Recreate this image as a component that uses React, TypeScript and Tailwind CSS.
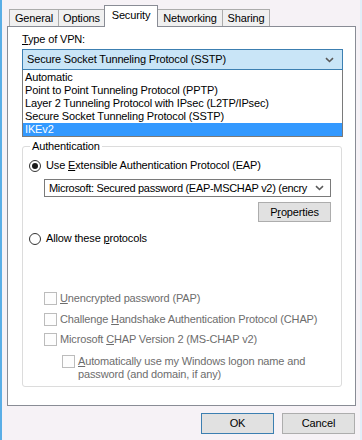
import React from "react";

function Chevron() {
  return (
    <svg width="9" height="6" viewBox="0 0 9 6" className="shrink-0">
      <path d="M1 1.2 L4.5 4.5 L8 1.2" fill="none" stroke="#5a5a5a" strokeWidth="1.6" />
    </svg>
  );
}

function Radio({ checked }: { checked?: boolean }) {
  return (
    <span className="w-[12px] h-[12px] rounded-full border border-[#333333] bg-white flex items-center justify-center shrink-0">
      {checked && <span className="w-[6px] h-[6px] rounded-full bg-[#1a1a1a]" />}
    </span>
  );
}

function Check() {
  return <span className="w-[13px] h-[13px] border border-[#bcbcbc] bg-[#fdfdfd] shrink-0" />;
}

export default function App() {
  const tabs = [
    { label: "General", w: "w-[50px]" },
    { label: "Options", w: "w-[47px]" },
    { label: "Security", w: "w-[54px]", sel: true },
    { label: "Networking", w: "w-[66px]" },
    { label: "Sharing", w: "w-[48px]" },
  ];
  const items = [
    "Automatic",
    "Point to Point Tunneling Protocol (PPTP)",
    "Layer 2 Tunneling Protocol with IPsec (L2TP/IPsec)",
    "Secure Socket Tunneling Protocol (SSTP)",
    "IKEv2",
  ];
  return (
    <div className="w-[362px] h-[440px] bg-[#f6f2f6] border-l-2 border-l-[#5aaee6] border-r-2 border-r-[#e2eef8] flex flex-col text-[11px] leading-[13px] tracking-[-0.15px] text-black font-['Liberation_Sans',Arial,sans-serif]">
      <div className="pt-[5px] pl-[7px] h-[26px] flex items-end">
        {tabs.map((t, i) =>
          t.sel ? (
            <div
              key={t.label}
              className={`${t.w} h-[22px] -mb-px -ml-px relative z-10 bg-white border border-b-0 border-[#898c95] flex items-start justify-center pt-[3px]`}
            >
              {t.label}
            </div>
          ) : (
            <div
              key={t.label}
              className={`${t.w} h-[17px] ${i === 0 ? "" : "-ml-px"} bg-[#f0f0f0] border border-b-0 border-[#acacac] flex items-center justify-center`}
            >
              {t.label}
            </div>
          )
        )}
      </div>
      <div className="ml-[5px] w-[349px] h-[380px] border border-[#898c95] bg-white pl-[14px] flex flex-col">
        <div className="mt-[6px]">
          <span className="underline">T</span>ype of VPN:
        </div>
        <div className="mt-[3px] w-[321px] h-[21px] border border-[#3c7fb1] bg-[#c9e5f7] flex items-center pl-[4px] pr-[8px] justify-between">
          <span>Secure Socket Tunneling Protocol (SSTP)</span>
          <Chevron />
        </div>
        <div className="w-[321px] border border-t-0 border-[#7a7a7a] pt-px flex flex-col">
          {items.map((it, i) => (
            <div
              key={it}
              className={`h-[13px] pl-[2px] ${i === 4 ? "bg-[#3399ff] text-white" : ""}`}
            >
              {it}
            </div>
          ))}
        </div>
        <fieldset className="mt-[3px] w-[320px] h-[247px] border border-[#dcdcdc] rounded-[3px] flex flex-col">
          <legend className="ml-[7px] px-[2px] leading-[13px]">Authentication</legend>
          <div className="mt-[6px] ml-[6px] h-[13px] flex items-center gap-[5px]">
            <Radio checked />
            <span>
              Use <span className="underline">E</span>xtensible Authentication Protocol (EAP)
            </span>
          </div>
          <div className="mt-[7px] ml-[21px] w-[287px] h-[18px] border border-[#7a7a7a] bg-white flex items-center pl-[4px] pr-[6px] justify-between gap-[4px]">
            <span className="whitespace-nowrap tracking-[-0.3px]">Microsoft: Secured password (EAP-MSCHAP v2) (encry</span>
            <Chevron />
          </div>
          <div className="mt-[5px] ml-[235px] w-[73px] h-[20px] border border-[#adadad] bg-[#e1e1e1] flex items-center justify-center">
            <span>
              P<span className="underline">r</span>operties
            </span>
          </div>
          <div className="mt-[10px] ml-[6px] h-[13px] flex items-center gap-[5px]">
            <Radio />
            <span>
              Allow these <span className="underline">p</span>rotocols
            </span>
          </div>
          <div className="mt-[47px] ml-[21px] h-[13px] flex items-center gap-[3px] text-[#6d6d6d]">
            <Check />
            <span>
              <span className="underline">U</span>nencrypted password (PAP)
            </span>
          </div>
          <div className="mt-[8px] ml-[21px] h-[13px] flex items-center gap-[3px] text-[#6d6d6d]">
            <Check />
            <span>
              Challenge <span className="underline">H</span>andshake Authentication Protocol (CHAP)
            </span>
          </div>
          <div className="mt-[7px] ml-[21px] h-[13px] flex items-center gap-[3px] text-[#6d6d6d]">
            <Check />
            <span>
              Microsoft <span className="underline">C</span>HAP Version 2 (MS-CHAP v2)
            </span>
          </div>
          <div className="mt-[9px] ml-[39px] flex items-start gap-[3px] text-[#6d6d6d]">
            <Check />
            <span className="w-[250px]">
              <span className="underline">A</span>utomatically use my Windows logon name and
              <br />
              password (and domain, if any)
            </span>
          </div>
        </fieldset>
      </div>
      <div className="mt-[7px] pr-[5px] flex justify-end gap-[8px]">
        <div className="w-[73px] h-[21px] border border-[#3c7fb1] bg-[#e1e1e1] flex items-center justify-center">OK</div>
        <div className="w-[73px] h-[21px] border border-[#adadad] bg-[#e1e1e1] flex items-center justify-center">Cancel</div>
      </div>
    </div>
  );
}
